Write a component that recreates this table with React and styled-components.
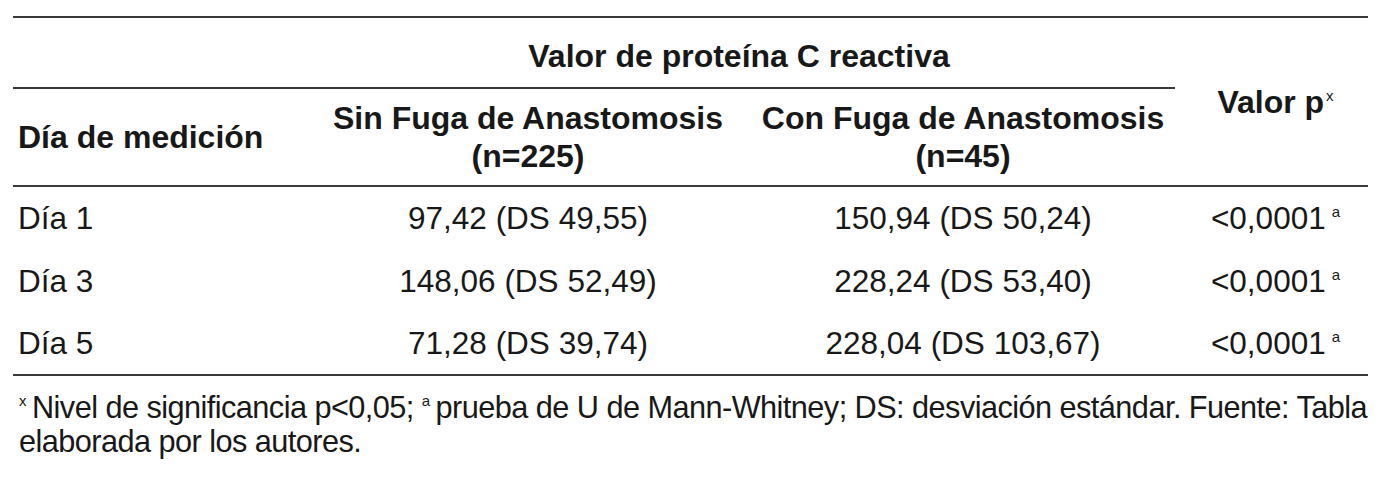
import styled, { createGlobalStyle } from "styled-components";

const Global = createGlobalStyle`
  body {
    margin: 0;
    background: #fff;
    font-family: "Liberation Sans", Arial, sans-serif;
    color: #181818;
  }
`;

const Wrap = styled.div`
  padding: 16px 32px 0 13px;
  width: 1355px;
`;

const Table = styled.table`
  width: 1355px;
  table-layout: fixed;
  border-collapse: collapse;
  border-top: 2px solid #3a3a3a;
  border-bottom: 2px solid #3a3a3a;
  font-size: 31.5px;
`;

const Head = styled.th`
  box-sizing: border-box;
  font-size: 32px;
  font-weight: bold;
  text-align: ${(p) => p.$align || "center"};
  vertical-align: middle;
  padding: 0 0 0 ${(p) => (p.$align === "left" ? "5px" : "0")};
  line-height: 38px;
  height: ${(p) => p.$h || "auto"};
  border-bottom: ${(p) => (p.$rule ? "2px solid #3a3a3a" : "none")};
`;

const SpanHead = styled.th`
  box-sizing: border-box;
  font-size: 32px;
  font-weight: bold;
  text-align: center;
  height: 71px;
  padding: 6px 18px 0 0;
  line-height: 38px;
  vertical-align: middle;
  position: relative;
  &::after {
    content: "";
    position: absolute;
    left: -300px;
    right: 8px;
    bottom: -1px;
    border-bottom: 2px solid #3a3a3a;
  }
`;

const Row = styled.tr`
  height: 63px;
`;

const Cell = styled.td`
  text-align: ${(p) => p.$align || "center"};
  padding: 0 0 0 ${(p) => (p.$align === "left" ? "5px" : "0")};
  vertical-align: middle;
  line-height: 36px;
`;

const Mark = styled.sup`
  display: inline-block;
  font-size: 15px;
  line-height: 15px;
  vertical-align: 12px;
  margin-left: ${(p) => p.$gap || "2px"};
  margin-right: ${(p) => p.$after || "0"};
  font-weight: normal;
`;

const Note = styled.p`
  margin: 15px 0 0 6px;
  font-size: 30.7px;
  line-height: 34px;
  letter-spacing: -0.55px;
  width: 1362px;
`;

const rows = [
  ["Día 1", "97,42 (DS 49,55)", "150,94 (DS 50,24)"],
  ["Día 3", "148,06 (DS 52,49)", "228,24 (DS 53,40)"],
  ["Día 5", "71,28 (DS 39,74)", "228,04 (DS 103,67)"],
];

export default function App() {
  return (
    <Wrap>
      <Global />
      <Table>
        <colgroup>
          <col style={{ width: 300 }} />
          <col style={{ width: 430 }} />
          <col style={{ width: 440 }} />
          <col style={{ width: 185 }} />
        </colgroup>
        <thead>
          <tr>
            <th />
            <SpanHead colSpan={2}>Valor de proteína C reactiva</SpanHead>
            <Head rowSpan={2} $rule>
              Valor p<Mark>x</Mark>
            </Head>
          </tr>
          <tr>
            <Head $align="left" $h="98px" $rule>
              Día de medición
            </Head>
            <Head $rule>
              Sin Fuga de Anastomosis
              <br />
              (n=225)
            </Head>
            <Head $rule>
              Con Fuga de Anastomosis
              <br />
              (n=45)
            </Head>
          </tr>
        </thead>
        <tbody>
          {rows.map((r) => (
            <Row key={r[0]}>
              <Cell $align="left">{r[0]}</Cell>
              <Cell>{r[1]}</Cell>
              <Cell>{r[2]}</Cell>
              <Cell>
                {"<0,0001"}
                <Mark $gap="6px">a</Mark>
              </Cell>
            </Row>
          ))}
        </tbody>
      </Table>
      <Note>
        <Mark $gap="0" $after="6px">x</Mark>Nivel de significancia p&lt;0,05;{" "}
        <Mark $gap="0" $after="6px">a</Mark>prueba de U de Mann-Whitney; DS: desviación
        estándar. Fuente: Tabla elaborada por los autores.
      </Note>
    </Wrap>
  );
}
